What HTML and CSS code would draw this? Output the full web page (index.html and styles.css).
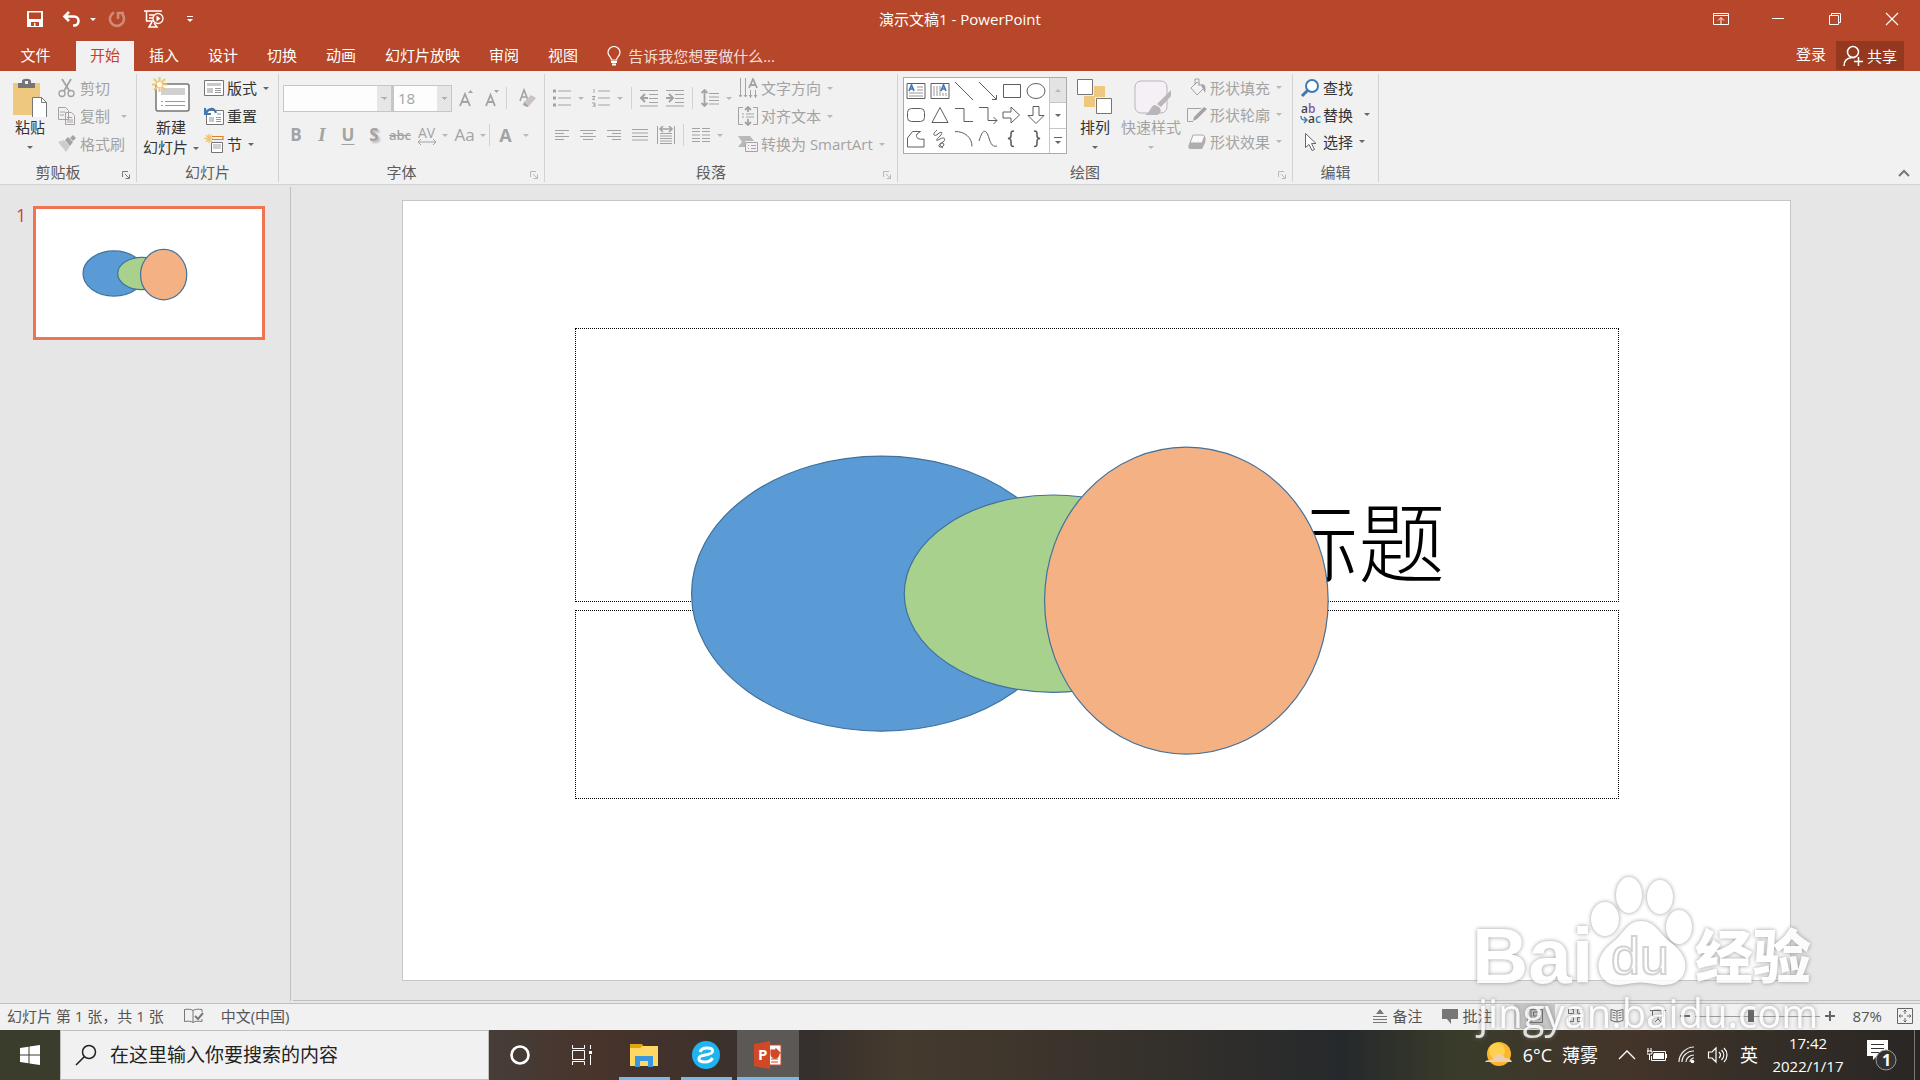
FILE: index.html
```html
<!DOCTYPE html>
<html lang="zh-CN">
<head>
    <meta charset="UTF-8">
    <meta name="viewport" content="width=device-width, initial-scale=1.0">
    <title>演示文稿1 - PowerPoint</title>
    <link rel="stylesheet" href="styles.css">
</head>
<body>
    <!-- shapes shared by the slide and its thumbnail -->
    <svg class="defs" width="0" height="0" aria-hidden="true">
        <symbol id="shapes" viewBox="0 0 1389 782" preserveAspectRatio="none">
            <g stroke="#41719c" stroke-width="1.200">
                <ellipse cx="479" cy="394" rx="190" ry="138" fill="#5b9bd5" vector-effect="non-scaling-stroke"/>
                <ellipse cx="651" cy="394" rx="149" ry="99" fill="#a9d18e" vector-effect="non-scaling-stroke"/>
                <ellipse cx="784.500" cy="401" rx="142" ry="154" fill="#f4b183" vector-effect="non-scaling-stroke"/>
            </g>
        </symbol>
        <symbol id="launcher" viewBox="0 0 8 8">
            <path d="M.5 6V.5H6M3 3l4 4M7.500 3.500v4h-4" fill="none" stroke="currentColor"/>
        </symbol>
    </svg>

    <header class="title-bar">
        <div class="quick">
            <button aria-label="保存"><svg width="18" height="18" viewBox="0 0 18 18"><path d="M1 1h16v16H1z" fill="#fff"/><path d="M3 2.500h12v6.500H3zM5 12h8v4H9.500v-3H8v3H5z" fill="#b7472a"/></svg></button>
            <button class="undo" aria-label="撤消"><svg width="20" height="18" viewBox="0 0 20 18"><path d="M7 2L2.500 6.500 7 11M3 6.500h9c6 0 6 9 0 9h-1" fill="none" stroke="#fff" stroke-width="2.600"/></svg><i class="caret"></i></button>
            <button aria-label="重复"><svg width="18" height="18" viewBox="0 0 18 18"><path d="M6 2.500a7 7 0 1 0 8 1.500M10 9V3h6" fill="none" stroke="#d08a76" stroke-width="2.600"/></svg></button>
            <button class="show" aria-label="从头开始"><svg width="20" height="20" viewBox="0 0 20 20"><path d="M0 2h18M2.500 2v10h7M5 6h5M5 9h4M8 13l-3 5h8l-3-4" fill="none" stroke="#fff" stroke-width="1.500"/><circle cx="14" cy="9.500" r="5" fill="#b7472a" stroke="#fff" stroke-width="1.300"/><path d="M12.500 6.500l4 3-4 3z" fill="#fff"/></svg></button>
            <button aria-label="自定义快速访问工具栏"><svg width="8" height="8" viewBox="0 0 8 8"><path d="M1 1.500h6" stroke="#fff"/><path d="M1 4h6L4 7z" fill="#fff"/></svg></button>
        </div>
        <h1>演示文稿1 - PowerPoint</h1>
        <div class="window-buttons">
            <button aria-label="功能区显示选项"><svg width="16" height="14" viewBox="0 0 16 14"><path d="M.500 1.500h15v11H.500zM.500 3.500h15M8 12V6M5 8.500L8 5.500l3 3" fill="none" stroke="#fff"/></svg></button>
            <button aria-label="最小化"><svg width="14" height="14" viewBox="0 0 14 14"><path d="M1 6.500h12" stroke="#fff"/></svg></button>
            <button aria-label="向下还原"><svg width="14" height="14" viewBox="0 0 14 14"><path d="M1.500 3.500h9v9h-9zM3.500 3.500v-2h9v9h-2" fill="none" stroke="#fff"/></svg></button>
            <button aria-label="关闭"><svg width="14" height="14" viewBox="0 0 14 14"><path d="M1 1l12 12M13 1L1 13" stroke="#fff" stroke-width="1.100"/></svg></button>
        </div>
    </header>

    <nav class="tabs">
        <button class="file">文件</button>
        <button class="active">开始</button>
        <button>插入</button>
        <button>设计</button>
        <button>切换</button>
        <button>动画</button>
        <button>幻灯片放映</button>
        <button>审阅</button>
        <button>视图</button>
        <button class="tell-me"><svg width="14" height="20" viewBox="0 0 14 20"><path d="M4.500 14c0-3-3.500-4-3.500-7.500a6 6 0 0 1 12 0c0 3.500-3.500 4.500-3.500 7.500z" fill="none" stroke="#fff" stroke-width="1.200"/><path d="M4 16h6M5 18.500h4" stroke="#fff" stroke-width="1.800"/></svg>告诉我您想要做什么...</button>
        <span class="spacer"></span>
        <a class="sign-in" href="#">登录</a>
        <button class="share"><svg width="20" height="22" viewBox="0 0 20 22"><circle cx="10" cy="7" r="5.500" fill="none" stroke="#fff" stroke-width="1.500"/><path d="M1 21c0-5 3-8 8-8.500h3M15.500 12v9M11 16.500h9" fill="none" stroke="#fff" stroke-width="1.500"/></svg>共享</button>
    </nav>

    <section class="ribbon">
        <div class="group clipboard">
            <div class="body">
                <button class="big"><svg width="36" height="40" viewBox="0 0 36 40"><path d="M1 6h27v32H1z" fill="#eec87e"/><path d="M6 11V6h4V4c0-3 9-3 9 0v2h4v5z" fill="#757575"/><rect x="13" y="4" width="3" height="3" fill="#f1f1f1"/><path d="M20.500 20.500h9l5 5v15h-14z" fill="#fff" stroke="#757575"/><path d="M29.500 20.500v5h5" fill="none" stroke="#757575"/></svg><span>粘贴</span><i class="caret"></i></button>
                <div class="rows">
                    <button disabled><svg width="20" height="20" viewBox="0 0 20 20"><path d="M5 1l7.500 12M14 1L7 13" fill="none" stroke="currentColor" stroke-width="1.800"/><circle cx="5" cy="15.500" r="3" fill="none" stroke="currentColor" stroke-width="1.400"/><circle cx="14" cy="15.500" r="3" fill="none" stroke="currentColor" stroke-width="1.400"/></svg>剪切</button>
                    <button disabled><svg width="20" height="20" viewBox="0 0 20 20"><path d="M1.500 1.500h7l3 3v9h-10zM8.500 6.500h6l3 3v9h-9z" fill="#f5eff5" stroke="currentColor"/><path d="M3 6h5M3 9h4M10 11.500h5M10 14h6M10 16h6" stroke="currentColor"/></svg>复制<i class="caret far"></i></button>
                    <button disabled><svg width="20" height="20" viewBox="0 0 20 20"><path d="M1 8l6-2 6 6-4 6z" fill="#d0c9d0"/><path d="M8 6l3-3 5 5-3 4zM13 4l3-3 3 3-3 3z" fill="currentColor"/></svg>格式刷</button>
                </div>
            </div>
            <div class="name">剪贴板<svg class="launch on" width="8" height="8"><use href="#launcher"/></svg></div>
        </div>

        <div class="group slides">
            <div class="body">
                <button class="big"><svg width="40" height="40" viewBox="0 0 40 40"><rect x="5" y="7" width="33" height="27" rx="2" fill="#fff" stroke="#757575" stroke-width="1.500"/><path d="M10 11h24v7H10z" fill="#d0d0d0"/><path d="M10 24.500h2M14 24.500h20M10 28.500h2M14 28.500h20" stroke="#999"/><path d="M8.500 0v15M1 7.500h15M3 2l11 11M14 2L3 13" stroke="#eec87e" stroke-width="2.200"/><circle cx="8.500" cy="7.500" r="2.500" fill="#fff"/></svg><span>新建</span><span>幻灯片<i class="caret"></i></span></button>
                <div class="rows">
                    <button><svg width="20" height="20" viewBox="0 0 20 20"><path d="M.500 2.500h19v15H.500z" fill="#fff" stroke="#757575"/><path d="M3 5h14v3H3zM3 10h6v5H3z" fill="#c8c8c8"/><path d="M11 10.500h6M11 12.500h6M11 14.500h6" stroke="#999"/></svg>版式<i class="caret"></i></button>
                    <button><svg width="20" height="20" viewBox="0 0 20 20"><path d="M2.500 4.500h17v14h-17z" fill="#fff" stroke="#757575"/><path d="M13 7h4v2h-4zM5 11h5v5H5z" fill="#c8c8c8"/><path d="M12 11.500h5M12 13.500h5M12 15.500h5" stroke="#999"/><path d="M1 2v6h6M2 7c3-5 8-6 10 0" fill="none" stroke="#3f7ab5" stroke-width="2.200"/></svg>重置</button>
                    <button><svg width="20" height="20" viewBox="0 0 20 20"><path d="M8 2.500h11v3H8" fill="none" stroke="#e07f26" stroke-width="1.200"/><path d="M7.500 8.500h11v10h-11z" fill="#fff" stroke="#757575"/><path d="M9 10h8v5H9z" fill="#d0d0d0"/><path d="M5 0v9M0 4.500h9M2 1l6 7M8 1L2 8" stroke="#eec87e" stroke-width="1.500"/></svg>节<i class="caret"></i></button>
                </div>
            </div>
            <div class="name">幻灯片</div>
        </div>

        <div class="group font">
            <div class="body tools">
                <div class="tool-row">
                    <select class="combo" disabled aria-label="字体"><option></option></select>
                    <select class="combo size" disabled aria-label="字号"><option>18</option></select>
                    <button class="tool grow" disabled aria-label="增大字号"><svg width="16" height="18" viewBox="0 0 16 18"><path d="M1 17L6 5l5 12M3 13h6" fill="none" stroke="currentColor" stroke-width="1.800"/><path d="M9 4h5l-2.500-3z" fill="currentColor"/></svg></button>
                    <button class="tool" disabled aria-label="减小字号"><svg width="16" height="18" viewBox="0 0 16 18"><path d="M1 17L5.500 6 10 17M3 13h5" fill="none" stroke="currentColor" stroke-width="1.800"/><path d="M9 1h5l-2.500 3z" fill="currentColor"/></svg></button>
                    <i class="bar"></i>
                    <button class="tool eraser" disabled aria-label="清除格式"><svg width="18" height="20" viewBox="0 0 18 20"><path d="M1 13L5 2l4 10M3 9h4" fill="none" stroke="currentColor" stroke-width="1.600"/><path d="M5 14l7-7 5 3-7 8z" fill="#c9c3c9"/><path d="M5 14l5 4-2 1-4-2z" fill="currentColor"/></svg></button>
                </div>
                <div class="tool-row">
                    <button class="tool" disabled><b>B</b></button>
                    <button class="tool italic" disabled>I</button>
                    <button class="tool underline" disabled>U</button>
                    <button class="tool shadow" disabled>S</button>
                    <button class="tool strike" disabled>abc</button>
                    <button class="tool drop spacing" disabled><span>AV<svg width="20" height="6" viewBox="0 0 20 6"><path d="M1 3h18M4 0L1 3l3 3M16 0l3 3-3 3" fill="none" stroke="currentColor"/></svg></span><i class="caret"></i></button>
                    <button class="tool drop" disabled>Aa<i class="caret"></i></button>
                    <i class="bar"></i>
                    <button class="tool drop colour" disabled>A<i class="caret"></i></button>
                </div>
            </div>
            <div class="name">字体<svg class="launch" width="8" height="8"><use href="#launcher"/></svg></div>
        </div>

        <div class="group paragraph">
            <div class="body">
                <div class="tools">
                    <div class="tool-row spaced">
                        <button class="list" disabled aria-label="项目符号"><svg width="18" height="18" viewBox="0 0 18 18"><path d="M5 2h13M5 9h13M5 16h13" stroke="currentColor"/><path d="M0 2h3M0 9h3M0 16h3" stroke="currentColor" stroke-width="3"/></svg><i class="caret"></i></button>
                        <button class="list" disabled aria-label="编号"><svg width="18" height="18" viewBox="0 0 18 18"><path d="M6 2h12M6 9h12M6 16h12M2 0v4M0 7.500h3L.500 10.500H3M0 14h3v4H0M1 16h2" fill="none" stroke="currentColor"/></svg><i class="caret"></i></button>
                        <i class="bar"></i>
                        <button disabled aria-label="减少缩进"><svg width="18" height="18" viewBox="0 0 18 18"><path d="M0 1.500h18M9 5.500h9M9 9.500h9M9 13.500h9M0 17h18" stroke="currentColor"/><path d="M8 9H1M5 5L1 9l4 4" fill="none" stroke="currentColor" stroke-width="2"/></svg></button>
                        <button disabled aria-label="增加缩进"><svg width="18" height="18" viewBox="0 0 18 18"><path d="M0 1.500h18M9 5.500h9M9 9.500h9M9 13.500h9M0 17h18" stroke="currentColor"/><path d="M0 9h7M3 5l4 4-4 4" fill="none" stroke="currentColor" stroke-width="2"/></svg></button>
                        <i class="bar"></i>
                        <button class="list" disabled aria-label="行距"><svg width="18" height="18" viewBox="0 0 18 18"><path d="M8 4.500h10M8 8h10M8 11.500h10M8 15h10" stroke="currentColor"/><path d="M3.500 1v16M.500 4l3-3 3 3M.500 14l3 3 3-3" fill="none" stroke="currentColor" stroke-width="1.800"/></svg><i class="caret"></i></button>
                    </div>
                    <div class="tool-row spaced">
                        <button disabled aria-label="左对齐"><svg width="18" height="18" viewBox="0 0 18 18"><path d="M2 4.500h14M2 7.500h9M2 10.500h14M2 13.500h9" stroke="currentColor"/></svg></button>
                        <button disabled aria-label="居中"><svg width="18" height="18" viewBox="0 0 18 18"><path d="M1 4.500h16M4 7.500h10M1 10.500h16M4 13.500h10" stroke="currentColor"/></svg></button>
                        <button disabled aria-label="右对齐"><svg width="18" height="18" viewBox="0 0 18 18"><path d="M2 4.500h14M7 7.500h9M2 10.500h14M7 13.500h9" stroke="currentColor"/></svg></button>
                        <button disabled aria-label="两端对齐"><svg width="18" height="18" viewBox="0 0 18 18"><path d="M1 3.500h16M1 7h16M1 10.500h16M1 14h16" stroke="currentColor"/></svg></button>
                        <button disabled aria-label="分散对齐"><svg width="18" height="18" viewBox="0 0 18 18"><path d="M.500 0v18M17.500 0v18M3 7.500h12M3 10h12M3 12.500h12M3 15h12M3 17.500h12" stroke="currentColor"/><path d="M3 3h12M6 0L3 3l3 3M12 0l3 3-3 3" fill="none" stroke="currentColor" stroke-width="1.600"/></svg></button>
                        <i class="bar"></i>
                        <button class="list" disabled aria-label="分栏"><svg width="18" height="18" viewBox="0 0 18 18"><path d="M0 2.500h8M10 2.500h8M0 5.500h8M10 5.500h8M0 9h8M10 9h8M0 12.500h8M10 12.500h8M0 15.500h8M10 15.500h8" stroke="currentColor"/></svg><i class="caret"></i></button>
                    </div>
                </div>
                <div class="rows">
                    <button disabled><svg width="20" height="20" viewBox="0 0 20 20"><path d="M2.500 0v19M7.500 0v19M12.500 12v8M17.500 12v8M1 17l1.500 2L4 17M6 17l1.500 2L9 17M11 17l1.500 2 1.500-2M16 17l1.500 2 1.500-2" fill="none" stroke="currentColor"/><path d="M11 10l4-9 4 9M12.500 7h5" fill="none" stroke="currentColor" stroke-width="1.800"/></svg>文字方向<i class="caret"></i></button>
                    <button disabled><svg width="20" height="20" viewBox="0 0 20 20"><path d="M5 1.500H.500v17H5M15 1.500h4.500v17H15M4 8h2M8 8h8M4 11h2M8 11h8" fill="none" stroke="currentColor"/><path d="M10 6V1M7 4l3-3 3 3M10 13v6M7 16l3 3 3-3" fill="none" stroke="currentColor" stroke-width="1.800"/></svg>对齐文本<i class="caret"></i></button>
                    <button disabled><svg width="20" height="20" viewBox="0 0 20 20"><path d="M0 2h12l4 5H7v6H0l4-5z" fill="#b8b8b8"/><path d="M7.500 8.500h12v9h-12z" fill="#f5eff5" stroke="currentColor"/><path d="M10 11.500h1M13 11.500h5M10 14.500h1M13 14.500h5" stroke="currentColor"/></svg>转换为 SmartArt<i class="caret"></i></button>
                </div>
            </div>
            <div class="name">段落<svg class="launch" width="8" height="8"><use href="#launcher"/></svg></div>
        </div>

        <div class="group drawing">
            <div class="body">
                <div class="gallery">
                    <div class="shapes">
                        <button aria-label="文本框"><svg width="20" height="20" viewBox="0 0 20 20"><path d="M1 2.500h18v15H1z"/><path d="M11 6h6M11 9h6M3 12h14M3 15h14" stroke="#999"/><path d="M3 10l2.500-6L8 10M4 8h3" stroke="#3f7ab5" stroke-width="1.700"/></svg></button>
                        <button aria-label="竖排文本框"><svg width="20" height="20" viewBox="0 0 20 20"><path d="M1 2.500h18v15H1z"/><path d="M4 5v10M7 5v10M10 5v10M13 12v3M16 12v3" stroke="#999"/><path d="M11 10l2.500-6L16 10M12 8h3" stroke="#3f7ab5" stroke-width="1.700"/></svg></button>
                        <button aria-label="直线"><svg width="20" height="20" viewBox="0 0 20 20"><path d="M1 1l18 18"/></svg></button>
                        <button aria-label="箭头"><svg width="20" height="20" viewBox="0 0 20 20"><path d="M1 1l17 17M18.500 14v4.500H14"/></svg></button>
                        <button aria-label="矩形"><svg width="20" height="20" viewBox="0 0 20 20"><path d="M1.500 3.500h17v13h-17z"/></svg></button>
                        <button aria-label="椭圆"><svg width="20" height="20" viewBox="0 0 20 20"><ellipse cx="10" cy="10" rx="9" ry="7.500"/></svg></button>
                        <button aria-label="圆角矩形"><svg width="20" height="20" viewBox="0 0 20 20"><rect x="1.500" y="3.500" width="17" height="13" rx="4"/></svg></button>
                        <button aria-label="等腰三角形"><svg width="20" height="20" viewBox="0 0 20 20"><path d="M10 2.500l8 15H2z"/></svg></button>
                        <button aria-label="肘形连接符"><svg width="20" height="20" viewBox="0 0 20 20"><path d="M1 3.500h9v13h9"/></svg></button>
                        <button aria-label="肘形箭头"><svg width="20" height="20" viewBox="0 0 20 20"><path d="M1 2.500h9v13h9M15.500 12l3.500 3.500-3.500 3.500"/></svg></button>
                        <button aria-label="右箭头"><svg width="20" height="20" viewBox="0 0 20 20"><path d="M1 7h8V2l8.500 8L9 18v-5H1z"/></svg></button>
                        <button aria-label="下箭头"><svg width="20" height="20" viewBox="0 0 20 20"><path d="M7 1.500v9H2l8 8 8-8h-5v-9z"/></svg></button>
                        <button aria-label="任意多边形"><svg width="20" height="20" viewBox="0 0 20 20"><path d="M1.500 18V9l5-6.500h8L11 5c-2 4 2 6 7 5v8z"/></svg></button>
                        <button aria-label="自由曲线"><svg width="20" height="20" viewBox="0 0 20 20"><path d="M7 1C1 6 5 8 8 5s6-2 2 2-5 6 0 3 6 1 3 3-6 4-3 5 6-4 2-4-1 4 1 5"/></svg></button>
                        <button aria-label="弧形"><svg width="20" height="20" viewBox="0 0 20 20"><path d="M1 2.500c10 0 17 6 17 15"/></svg></button>
                        <button aria-label="曲线"><svg width="20" height="20" viewBox="0 0 20 20"><path d="M1 12C5-1 8 0 11 9c2 7 4 9 8 8"/></svg></button>
                        <button aria-label="左大括号"><svg width="20" height="20" viewBox="0 0 20 20"><path d="M12 2c-3 0-3 1-3 4 0 2 0 3-3 3.500 3 .500 3 1.500 3 4 0 3 0 4 3 4" stroke-width="1.600"/></svg></button>
                        <button aria-label="右大括号"><svg width="20" height="20" viewBox="0 0 20 20"><path d="M8 2c3 0 3 1 3 4 0 2 0 3 3 3.500-3 .500-3 1.500-3 4 0 3 0 4-3 4" stroke-width="1.600"/></svg></button>
                    </div>
                    <div class="gallery-scroll">
                        <button disabled aria-label="上一行"><i class="caret up"></i></button>
                        <button aria-label="下一行"><i class="caret"></i></button>
                        <button aria-label="其他"><svg width="8" height="8" viewBox="0 0 8 8"><path d="M0 .500h8" stroke="#666"/><path d="M1 4h6L4 7z" fill="#666"/></svg></button>
                    </div>
                </div>
                <button class="big"><svg width="36" height="40" viewBox="0 0 36 40"><path d="M17 9h11v11H17zM7 19h11v11H7z" fill="#eec87e"/><path d="M.500 2.500h15v15H.500zM19.500 21.500h15v15h-15z" fill="#fff" stroke="#757575"/></svg><span>排列</span><i class="caret"></i></button>
                <button class="big wide" disabled><svg width="40" height="40" viewBox="0 0 40 40"><rect x="4" y="4" width="32" height="32" rx="6" fill="#f5f0f6" stroke="#b9b5b9"/><path d="M40 13L26 27l4 3 10-11zM24 28c-5 1-4 7-10 10h12c4-1 5-5 2-8z" fill="#b9b5b9"/></svg><span>快速样式</span><i class="caret"></i></button>
                <div class="rows tight">
                    <button disabled><svg width="20" height="20" viewBox="0 0 20 20"><path d="M10 4l7 6-7 7-6-7zM8 7V1h4v7" fill="#f5f0f6" stroke="currentColor"/><path d="M14 6c5 0 5 4 4 9l-3-6z" fill="currentColor"/></svg>形状填充<i class="caret"></i></button>
                    <button disabled><svg width="20" height="20" viewBox="0 0 20 20"><path d="M14 3.500H.500v13H6" fill="none" stroke="currentColor"/><path d="M6 16l1-4L17 2l3 2L10 14z" fill="currentColor"/></svg>形状轮廓<i class="caret"></i></button>
                    <button disabled><svg width="20" height="20" viewBox="0 0 20 20"><path d="M6 4h10c3 0 3 3 2 7l-3 6H4c-3 0-3-2-2-5z" fill="#b0acb0"/><path d="M6 3h9c2 0 3 1 2 3l-2 5H3z" fill="#fbf8fb" stroke="#aaa"/></svg>形状效果<i class="caret"></i></button>
                </div>
            </div>
            <div class="name">绘图<svg class="launch" width="8" height="8"><use href="#launcher"/></svg></div>
        </div>

        <div class="group editing">
            <div class="body">
                <div class="rows tight">
                    <button><svg width="20" height="20" viewBox="0 0 20 20"><circle cx="12" cy="8" r="6" fill="#fff" stroke="#3f7ab5" stroke-width="2"/><path d="M7.500 12.500L2 18" stroke="#3f7ab5" stroke-width="3"/></svg>查找</button>
                    <button><svg class="replace" width="20" height="20" viewBox="0 0 20 20"><text x="1" y="8" fill="#444">a<tspan fill="#8a56ac">b</tspan></text><text x="8" y="18" fill="#444">a<tspan fill="#3f7ab5">c</tspan></text><path d="M1 11c0 4 2 4 5 4M4 12l3 3-3 3" fill="none" stroke="#3f7ab5" stroke-width="1.400"/></svg>替换<i class="caret far"></i></button>
                    <button><svg width="20" height="20" viewBox="0 0 20 20"><path d="M5.500 1.500v14l3.500-3 3 6 2.500-1-3-6H16z" fill="#fff" stroke="#666"/></svg>选择<i class="caret"></i></button>
                </div>
            </div>
            <div class="name">编辑</div>
        </div>
        <button class="collapse" aria-label="折叠功能区"><svg width="12" height="8" viewBox="0 0 12 8"><path d="M1 7l5-5 5 5" fill="none" stroke="#777" stroke-width="2"/></svg></button>
    </section>

    <main class="workspace">
        <aside class="thumbs">
            <span>1</span>
            <button class="thumb" aria-label="幻灯片 1"><svg><use href="#shapes"/></svg></button>
        </aside>
        <div class="stage">
            <div class="slide">
                <div class="placeholder heading">单击此处添加标题</div>
                <div class="placeholder subtitle"></div>
                <svg class="drawn"><use href="#shapes"/></svg>
            </div>
        </div>
    </main>

    <footer class="status">
        <span>幻灯片 第 1 张，共 1 张</span>
        <button class="proof" aria-label="拼写检查"><svg width="20" height="16" viewBox="0 0 20 16"><path d="M9 2.500C7 1 4 1 .500 1.500v12C4 13 7 13 9 14.500zM9 2.500c2-1.500 5-1.500 9-1V4M9 14.500c2-1.500 5-1.500 9-1V11" fill="none" stroke="#777"/><path d="M11 8l3 3 5-6" fill="none" stroke="#777" stroke-width="2"/></svg></button>
        <button>中文(中国)</button>
        <span class="spacer"></span>
        <button class="notes"><svg width="16" height="16" viewBox="0 0 16 16"><path d="M4 6h8L8 1z" fill="#777"/><path d="M1 8.500h14M1 11.500h14M1 14.500h14" stroke="#777"/></svg>备注</button>
        <button class="notes"><svg width="16" height="16" viewBox="0 0 16 16"><path d="M0 1h16v10H9v5l-4-5H0z" fill="#777"/></svg>批注</button>
        <div class="views">
            <button class="current" aria-label="普通"><svg width="16" height="14" viewBox="0 0 16 14"><path d="M.500.500h15v13H.500zM4 .500v13M6.500 3h6.500v4H6.500zM6.500 10h6.500" fill="none" stroke="#666"/></svg></button>
            <button aria-label="幻灯片浏览"><svg width="16" height="14" viewBox="0 0 16 14"><path d="M.500.500h5v4h-5zM9.500.500h5v4h-5zM.500 8.500h5v4h-5zM9.500 8.500h5v4h-5z" fill="none" stroke="#666"/></svg></button>
            <button aria-label="阅读视图"><svg width="16" height="14" viewBox="0 0 16 14"><path d="M8 2L2 .500v11L8 13l6-1.500V.500zM8 2v11M3.500 3.500l3 .500M3.500 6l3 .500M3.500 8.500l3 .500M9.500 4l3-.500M9.500 6.500l3-.500M9.500 9l3-.500" fill="none" stroke="#666"/></svg></button>
            <button aria-label="幻灯片放映"><svg width="16" height="14" viewBox="0 0 16 14"><path d="M0 1.500h16M2.500 2v5.500h11V2M8 7v3M5 13l3-3 3 3" fill="none" stroke="#666"/></svg></button>
        </div>
        <button class="step" aria-label="缩小"><svg width="12" height="12" viewBox="0 0 12 12"><path d="M1 6h10" stroke="#666" stroke-width="2"/></svg></button>
        <input class="zoom" type="range" min="0" max="100" value="44" aria-label="缩放">
        <button class="step" aria-label="放大"><svg width="12" height="12" viewBox="0 0 12 12"><path d="M1 6h10M6 1v10" stroke="#666" stroke-width="2"/></svg></button>
        <button class="percent">87%</button>
        <button aria-label="适应窗口"><svg width="16" height="16" viewBox="0 0 16 16"><path d="M.500.500h15v15H.500zM8 2v4M8 10v4M2 8h4M10 8h4M6.500 3.500L8 2l1.500 1.500M6.500 12.500L8 14l1.500-1.500M3.500 6.500L2 8l1.500 1.500M12.500 6.500L14 8l-1.500 1.500" fill="none" stroke="#666"/></svg></button>
    </footer>

    <div class="taskbar">
        <button class="start" aria-label="开始"><svg width="20" height="20" viewBox="0 0 20 20"><path d="M0 3l8.500-1.200V9.500H0zM9.500 1.600L20 0v9.500H9.500zM0 10.500h8.500v7.800L0 17zM9.500 10.500H20V20L9.500 18.400z" fill="#fff"/></svg></button>
        <label class="search">
            <svg width="22" height="22" viewBox="0 0 22 22"><circle cx="14" cy="8" r="6.500" fill="none" stroke="#222" stroke-width="1.500"/><path d="M9.500 12.500L1 21" stroke="#222" stroke-width="1.600"/></svg>
            <input type="text" placeholder="在这里输入你要搜索的内容" aria-label="搜索">
        </label>
        <div class="apps">
            <button aria-label="Cortana"><svg width="22" height="22" viewBox="0 0 22 22"><circle cx="11" cy="11" r="8.500" fill="none" stroke="#fff" stroke-width="2.600"/></svg></button>
            <button aria-label="任务视图"><svg width="22" height="20" viewBox="0 0 22 20"><path d="M1.500 0v3.500h12V0M1.500 5.500h12v9h-12zM1.500 20v-3.500h12V20M19.500 0v4M19.500 10v10" fill="none" stroke="#fff"/><path d="M18 6h3v3h-3z" fill="#fff"/></svg></button>
            <button class="open" aria-label="文件资源管理器"><svg width="28" height="24" viewBox="0 0 28 24"><path d="M0 1h12l2 3h-2l-2 2H0z" fill="#e2a50e"/><path d="M0 5h10l3-2h15v20H0z" fill="#ffd763"/><path d="M5 24V13h18v11h-5v-6h-8v6z" fill="#3a96dd"/></svg></button>
            <button class="open" aria-label="浏览器"><svg width="28" height="28" viewBox="0 0 28 28"><circle cx="14" cy="14" r="14" fill="#1fb3f0"/><path d="M8 11c1-3 4-4 7-4 4 0 6 1 5.500 3.500C20 13 16 13.500 13 14c-3 .500-5.500 1-6 3-.500 3 2 4 6 4 4 0 6-1 7.500-4" fill="none" stroke="#fff" stroke-width="3"/></svg></button>
            <button class="open focused" aria-label="PowerPoint"><svg width="28" height="28" viewBox="0 0 28 28"><path d="M15 4h12v20H15z" fill="#fff" stroke="#d24726"/><path d="M17 9h4v4h4a4 4 0 0 1-8 0zM22 8v4h4zM17 18h7M17 21h7" fill="#d24726" stroke="#d24726" stroke-width="1.200"/><path d="M0 3l16-3v28L0 25z" fill="#d24726"/><text x="4" y="19" class="app-letter">P</text></svg></button>
        </div>
        <span class="spacer"></span>
        <button class="weather"><svg width="28" height="28" viewBox="0 0 28 28"><circle cx="14" cy="13" r="12" fill="#fdb52d"/><circle cx="12" cy="10" r="8" fill="#ffd04f"/><path d="M0 21c2-3 6-1 8-3 2-6 10-6 12-1 3 0 6 1 7 4z" fill="#ead0ae"/></svg><span>6°C</span><span>薄雾</span></button>
        <div class="tray">
            <button aria-label="显示隐藏的图标"><svg width="18" height="12" viewBox="0 0 18 12"><path d="M1 10l8-8 8 8" fill="none" stroke="#fff" stroke-width="1.300"/></svg></button>
            <button aria-label="电源"><svg width="20" height="16" viewBox="0 0 20 16"><path d="M6 4.500h12.500v9H4.500V9" fill="none" stroke="#fff"/><path d="M7 6h10v6H6V8zM18 7h2v4h-2z" fill="#fff"/><path d="M1 1v4M4 1v4M0 4h5v3H0zM2.500 7v6" fill="none" stroke="#fff"/></svg></button>
            <button aria-label="网络"><svg width="18" height="18" viewBox="0 0 18 18"><path d="M1 16C1 8 8 1 16 1M4 16C4 10 9 5 16 5M8 16c0-4 4-7 8-7M12 16c0-2 2-4 4-4" fill="none" stroke="#eee" stroke-width="1.200"/><circle cx="14.500" cy="15.500" r="1.800" fill="#fff"/></svg></button>
            <button aria-label="音量"><svg width="22" height="18" viewBox="0 0 22 18"><path d="M1.500 6h3.500l4-4v14l-4-4H1.500zM12 6c2 2 2 4 0 6M14.500 4c3 3 3 7 0 10M17 2c4 4 4 10 0 14" fill="none" stroke="#fff" stroke-width="1.200"/></svg></button>
            <button class="ime">英</button>
        </div>
        <button class="clock"><span>17:42</span><span>2022/1/17</span></button>
        <button class="notify" aria-label="通知"><svg width="32" height="32" viewBox="0 0 32 32"><path d="M1 1h21v16H11l-4 4v-4H1z" fill="#fff"/><path d="M5 5.500h13M5 9.500h13M5 13.500h8" stroke="#333"/><circle cx="20" cy="21" r="10" fill="#333" stroke="#999"/><text x="16" y="27" class="badge">1</text></svg></button>
        <span class="desktop-edge"></span>
    </div>

    <svg class="watermark" width="344" height="172" viewBox="0 0 344 172" aria-hidden="true">
        <g fill="#fff">
            <text x="-4" y="111" class="mark-latin">Bai</text>
            <ellipse cx="129" cy="47" rx="14" ry="17"/>
            <ellipse cx="153" cy="23" rx="13" ry="18"/>
            <ellipse cx="184" cy="25" rx="13" ry="17"/>
            <ellipse cx="203" cy="55" rx="13" ry="17"/>
            <path d="M165 49c-14 0-18 14-28 21-12 9-16 20-14 28 3 14 16 17 28 14 9-2 18-2 27 0 13 3 28 0 31-14 2-11-4-20-15-28-11-9-15-21-29-21z"/>
            <text x="135" y="102" class="mark-du">du</text>
            <text x="219" y="106" class="mark-cjk">经验</text>
        </g>
        <text x="2" y="156" class="mark-url">jingyan.baidu.com</text>
    </svg>
</body>
</html>
```
FILE: styles.css
```css
* {
    box-sizing: border-box;
}
body {
    margin: 0;
    min-height: 100vh;
    display: flex;
    flex-direction: column;
    position: relative;
    font-family: "Open Sans", "Noto Sans CJK SC", sans-serif;
    font-size: 15px;
    line-height: 20px;
    color: #333;
    background: #e6e6e6;
}
button,
input,
select {
    font: inherit;
    color: inherit;
    margin: 0;
    padding: 0;
    border: none;
    background: none;
}
button {
    display: flex;
    align-items: center;
    justify-content: center;
    white-space: nowrap;
}
button:disabled {
    color: #a3a3a3;
}
svg {
    display: block;
    flex: none;
}
.defs {
    position: absolute;
}
.spacer {
    flex: 1;
}
.caret {
    flex: none;
    border: 3px solid transparent;
    border-top-color: #666;
    border-bottom: none;
}
:disabled .caret {
    border-top-color: #b8b8b8;
}

/* title bar */
.title-bar {
    display: grid;
    grid-template-columns: 1fr auto 1fr;
    align-items: center;
    height: 41px;
    padding-bottom: 3px;
    background: #b7472a;
    color: #fff;
}
.title-bar h1 {
    margin: 0;
    font-size: 15px;
    font-weight: normal;
}
.title-bar .caret {
    border-top-color: #fff;
}
.quick {
    display: flex;
    align-items: center;
    gap: 18px;
    padding-left: 26px;
}
.quick .undo {
    gap: 8px;
    margin-right: -6px;
}
.quick .show {
    margin-right: 4px;
}
.window-buttons {
    display: flex;
    justify-content: flex-end;
}
.window-buttons button {
    width: 57px;
    height: 38px;
}

/* tabs */
.tabs {
    display: flex;
    align-items: stretch;
    height: 30px;
    gap: 1px;
    background: #b7472a;
    color: #fff;
}
.tabs button {
    padding: 0 14px 3px;
    height: 30px;
}
.tabs .file {
    width: 75px;
    padding-right: 18px;
}
.tabs .active {
    background: #f1f1f1;
    color: #c8421f;
}
.tabs .tell-me {
    gap: 7px;
    padding-bottom: 0;
    color: #f8ddd5;
}
.sign-in {
    padding: 3px 9px;
    color: #fff;
    text-decoration: none;
}
.tabs .share {
    width: 68px;
    height: 29px;
    margin-right: 16px;
    padding: 0;
    gap: 4px;
    background: #943920;
}

/* ribbon */
.ribbon {
    display: flex;
    padding: 3px 0 2px;
    background: #f1f1f1;
    border-bottom: 1px solid #d2d2d2;
}
.group {
    display: flex;
    flex-direction: column;
    border-right: 1px solid #d2d2d2;
}
.body {
    display: flex;
    align-items: flex-start;
    height: 88px;
}
.name {
    position: relative;
    text-align: center;
    color: #5c5c5c;
}
.launch {
    position: absolute;
    right: 6px;
    bottom: 3px;
    color: #b8b8b8;
}
.launch.on {
    color: #777;
}
.big {
    flex-direction: column;
    justify-content: flex-start;
    width: 40px;
    padding-top: 3px;
}
.big > .caret {
    margin-top: 9px;
}
.big .caret {
    display: inline-block;
    vertical-align: middle;
}
.big span .caret {
    margin-left: 5px;
}
.big.wide {
    width: 64px;
}
.rows button {
    height: 28px;
    gap: 3px;
}
.rows.tight button {
    height: 27px;
}
.rows .caret {
    margin-left: 3px;
}
.rows .caret.far {
    margin-left: 8px;
}
.clipboard {
    width: 137px;
}
.clipboard .body {
    padding-left: 10px;
    gap: 7px;
}
.clipboard .name,
.font .name,
.paragraph .name,
.drawing .name {
    padding-right: 20px;
}
.slides {
    width: 142px;
}
.slides .body {
    padding-left: 5px;
    gap: 4px;
}
.slides .big {
    width: 58px;
}
.font {
    width: 266px;
}
.paragraph {
    width: 353px;
}
.paragraph .body {
    padding-left: 8px;
}
.paragraph .rows {
    margin-left: 6px;
}
.drawing {
    width: 395px;
}
.drawing .body {
    padding-left: 5px;
    gap: 4px;
}
.drawing .big:not(.wide) {
    margin-left: 4px;
}
.editing {
    width: 86px;
}
.editing .body {
    padding-left: 7px;
}

/* font and paragraph tools */
.tools {
    display: flex;
    flex-direction: column;
    gap: 11px;
    padding-top: 11px;
}
.font .tools {
    padding-left: 4px;
}
.tool-row {
    display: flex;
    align-items: center;
    height: 26px;
}
.tool-row.spaced {
    gap: 8px;
}
.bar {
    width: 1px;
    height: 22px;
    background: #d2d2d2;
}
.list {
    gap: 7px;
}
.combo {
    width: 109px;
    height: 27px;
    padding-left: 4px;
    appearance: none;
    opacity: 1;
    color: #a3a3a3;
    border: 1px solid #c6c6c6;
    border-radius: 0;
    background-color: #fdfdfd;
    background-image: conic-gradient(from -45deg at 50% 100%, #b0b0b0 90deg, transparent 0), linear-gradient(#e6e6e6, #e6e6e6);
    background-repeat: no-repeat;
    background-size: 6px 3px, 14px 100%;
    background-position: right 4px center, right;
}
.combo.size {
    width: 60px;
    border-left-width: 2px;
}
.tool {
    width: 26px;
    height: 26px;
    font-size: 17px;
}
.tool.grow {
    margin-left: 2px;
}
.tool.eraser {
    width: 42px;
}
.tool.italic {
    font-family: "Liberation Serif", serif;
    font-style: italic;
    font-weight: bold;
    font-size: 19px;
}
.tool.underline {
    font-weight: bold;
    text-decoration: underline;
    text-underline-offset: 3px;
}
.tool.shadow {
    font-weight: bold;
    text-shadow: 2px 2px 2px #bbb;
}
.tool.strike {
    font-size: 13px;
    font-weight: 600;
    text-decoration: line-through;
}
.tool.drop {
    width: 38px;
    gap: 5px;
}
.tool.spacing {
    font-size: 14px;
    line-height: 13px;
}
.tool.colour {
    width: 48px;
    font-weight: bold;
    font-size: 18px;
    gap: 11px;
}

/* shapes gallery */
.gallery {
    display: flex;
    width: 164px;
    height: 77px;
    margin-top: 3px;
    border: 1px solid #ababab;
    background: #fff;
}
.shapes {
    display: grid;
    grid-template-columns: repeat(6, 24px);
    grid-template-rows: repeat(3, 24px);
    padding-top: 1px;
    flex: 1;
}
.shapes svg {
    fill: none;
    stroke: #5e5e5e;
}
.gallery-scroll {
    display: flex;
    flex-direction: column;
    width: 17px;
    border-left: 1px solid #c6c6c6;
}
.gallery-scroll button {
    flex: 1;
}
.gallery-scroll button + button {
    border-top: 1px solid #c6c6c6;
}
.gallery-scroll button:disabled {
    background: #e3e3e3;
}
.caret.up {
    transform: rotate(180deg);
}
.replace {
    font-size: 12px;
    font-weight: 600;
    overflow: visible;
}
.collapse {
    align-self: flex-end;
    margin: 0 10px 5px auto;
}

/* slide list and editing area */
.workspace {
    flex: 1;
    display: flex;
    padding: 2px 0;
}
.thumbs {
    display: flex;
    align-items: flex-start;
    width: 291px;
    padding: 19px 25px 0 16px;
    gap: 7px;
    border-right: 1px solid #bfbfbf;
}
.thumbs span {
    width: 10px;
    font-size: 18px;
    line-height: 18px;
    color: #d24726;
}
.thumb {
    flex: 1;
    aspect-ratio: 232 / 134;
    border: 3px solid #f07452;
    background: #fff;
}
.thumb svg,
.drawn {
    width: 100%;
    height: 100%;
}
.stage {
    flex: 1;
    margin-left: 2px;
    padding: 13px 129px 18px 109px;
    border-bottom: 1px solid #bfbfbf;
}
.slide {
    position: relative;
    aspect-ratio: 16 / 9;
    border: 1px solid #c6c6c6;
    background: #fff;
}
.drawn {
    position: absolute;
    inset: 0;
}
.placeholder {
    position: absolute;
    left: 12.4%;
    width: 75.3%;
    border: 1px dotted #000;
}
.heading {
    top: 16.3%;
    height: 35.1%;
    display: flex;
    align-items: flex-end;
    justify-content: center;
    padding-bottom: 7px;
    font-family: "Noto Sans CJK SC", sans-serif;
    font-weight: 300;
    font-size: 87px;
    line-height: 112px;
    white-space: nowrap;
    color: #000;
}
.subtitle {
    top: 52.5%;
    height: 24.3%;
}

/* status bar */
.status {
    display: flex;
    align-items: center;
    height: 27px;
    padding: 0 7px 2px;
    border-top: 1px solid #bfbfbf;
    background: #f1f1f1;
    color: #555;
}
.proof {
    margin: 0 17px 0 20px;
}
.notes {
    gap: 4px;
    margin-right: 20px;
}
.notes + .notes {
    margin-right: 22px;
}
.views {
    display: flex;
}
.views button {
    width: 41px;
    height: 26px;
}
.views .current {
    background: #c6c6c6;
}
.step {
    width: 14px;
}
.zoom {
    width: 125px;
    height: 12px;
    margin: 0 3px;
    appearance: none;
    background: linear-gradient(#999, #999) center / 100% 1px no-repeat;
}
.zoom::-webkit-slider-thumb {
    appearance: none;
    width: 6px;
    height: 12px;
    background: #666;
}
.percent {
    margin: 0 15px;
}

/* taskbar */
.taskbar {
    display: flex;
    height: 50px;
    color: #fff;
    background: linear-gradient(90deg, #3a3c2c 0, #3a3c2c 4%, #463e3a 25%, #48342b 31%, #352f2d 42%, #453a2e 47%, #3c342c 55%, #26292b 70%, #3a3c2a 76%, #44342a 85%, #352f27 91%, #2a2624 100%);
}
.start {
    width: 60px;
}
.search {
    display: flex;
    align-items: center;
    width: 429px;
    padding-left: 14px;
    gap: 13px;
    border: 1px solid #bfbfbf;
    background: #f1f1f1;
}
.search input {
    flex: 1;
    font-size: 19px;
    line-height: 28px;
    color: #222;
}
.search input::placeholder {
    color: #222;
    opacity: 1;
}
.apps {
    display: flex;
}
.apps button {
    width: 62px;
    background-position: bottom;
    background-repeat: no-repeat;
}
.apps .open {
    background-image: linear-gradient(#76b9ed, #76b9ed);
    background-size: 51px 3px;
}
.apps .focused {
    background-color: #5c5856;
    background-size: 100% 3px;
}
.app-letter {
    font-size: 15px;
    font-weight: bold;
    fill: #fff;
}
.weather {
    gap: 10px;
    margin-right: 20px;
    font-size: 18px;
}
.tray {
    display: flex;
    gap: 11px;
}
.ime {
    font-size: 18px;
}
.clock {
    flex-direction: column;
    width: 100px;
    line-height: 23px;
}
.notify {
    width: 48px;
}
.badge {
    font-size: 16px;
    font-weight: bold;
    fill: #fff;
}
.desktop-edge {
    width: 6px;
    margin-left: 8px;
    border-left: 1px solid #777;
}

/* site mark over the lower right corner */
.watermark {
    position: absolute;
    right: 100px;
    bottom: 36px;
    opacity: 0.85;
    pointer-events: none;
    overflow: visible;
    filter: drop-shadow(0 0 2px #888);
}
.mark-latin {
    font-family: "Liberation Sans", sans-serif;
    font-weight: bold;
    font-size: 78px;
}
.mark-du {
    font-family: "Liberation Sans", sans-serif;
    font-size: 52px;
    stroke: #ccc;
    stroke-width: 2px;
}
.mark-cjk {
    font-family: "Noto Sans CJK SC", sans-serif;
    font-weight: 900;
    font-size: 58px;
}
.mark-url {
    font-size: 40px;
    fill: #fff;
}
```
